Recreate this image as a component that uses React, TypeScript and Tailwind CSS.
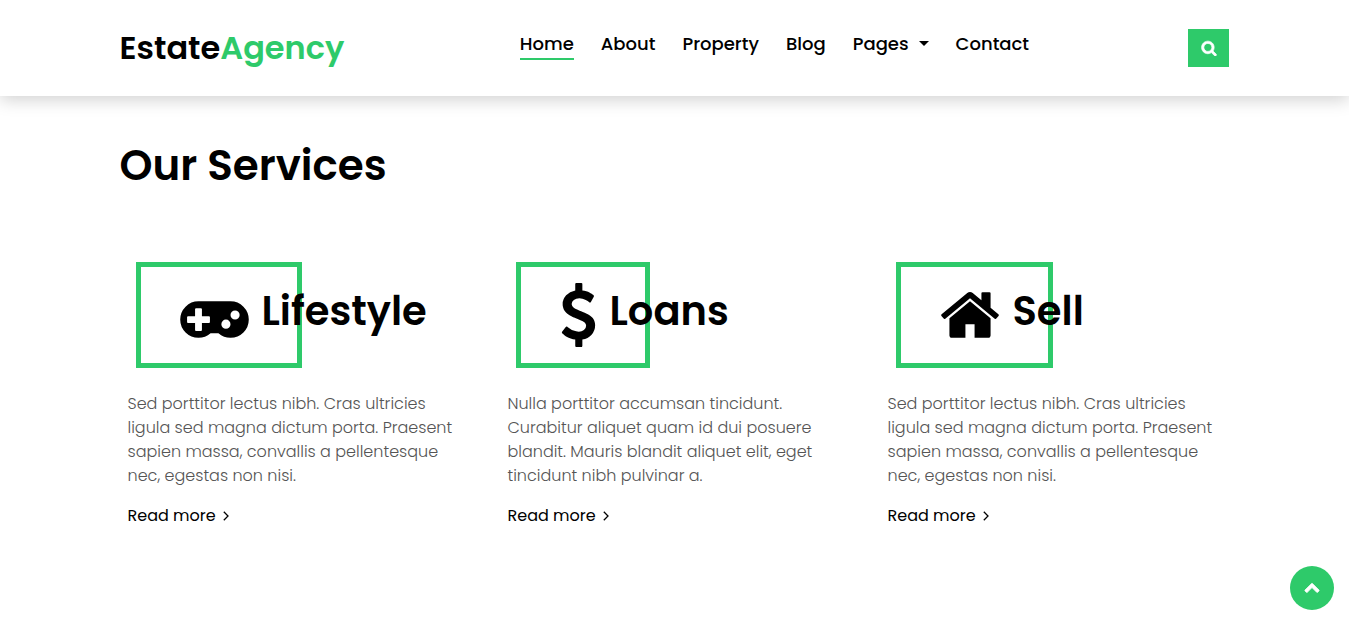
import type { ReactNode } from "react";

const GAMEPAD =
  "M832 1088v-128q0-14-9-23t-23-9h-192v-192q0-14-9-23t-23-9h-128q-14 0-23 9t-9 23v192h-192q-14 0-23 9t-9 23v128q0 14 9 23t23 9h192v192q0 14 9 23t23 9h128q14 0 23-9t9-23v-192h192q14 0 23-9t9-23zm576 64q0-53-37.5-90.5t-90.5-37.5-90.5 37.5-37.5 90.5 37.5 90.5 90.5 37.5 90.5-37.5 37.5-90.5zm256-256q0-53-37.5-90.5t-90.5-37.5-90.5 37.5-37.5 90.5 37.5 90.5 90.5 37.5 90.5-37.5 37.5-90.5zm256 128q0 212-150 362t-362 150q-192 0-338-128h-220q-146 128-338 128-212 0-362-150t-150-362 150-362 362-150h896q212 0 362 150t150 362z";
const DOLLAR =
  "M1362 1185q0 153-99.5 263.5t-258.5 136.5v175q0 14-9 23t-23 9h-135q-13 0-22.5-9.5t-9.5-22.5v-175q-66-9-127.5-31t-101.5-44.5-74-48-46.5-37.5-17.5-18q-17-21-2-41l103-135q7-10 23-12 15-2 24 9l2 2q113 99 243 125 37 8 74 8 81 0 142.5-43t61.5-122q0-28-15-53t-33.5-42-58.5-37.5-66-32-80-32.5q-39-16-61.5-25t-61.5-26.5-62.5-31-56.5-35.5-53.5-42.5-43.5-49-35.5-58-21-66.5-8.5-78q0-138 98-242t255-134v-180q0-13 9.5-22.5t22.5-9.5h135q14 0 23 9t9 23v176q57 6 110.5 23t87 33.5 63.5 37.5 39 29 15 14q17 18 5 38l-81 146q-8 15-23 16-14 3-27-7-3-3-14.5-12t-39-26.5-58.5-32-74.5-26-85.5-11.5q-95 0-155 43t-60 111q0 26 8.5 48t29.5 41.5 39.5 33 56 31 60.5 27 70 27.5q53 20 81 31.5t76 35 75.5 42.5 62 50 53 63.5 31.5 76.5 13 94z";
const HOME =
  "M1472 992v480q0 26-19 45t-45 19h-384v-384h-256v384h-384q-26 0-45-19t-19-45v-480q0-1 .5-3t.5-3l575-474 575 474q1 2 1 6zm223-69l-62 74q-8 9-21 11h-3q-13 0-21-7l-692-577-692 577q-12 8-24 7-13-2-21-11l-62-74q-8-10-7-23.5t11-21.5l719-599q32-26 76-26t76 26l244 204v-195q0-14 9-23t23-9h192q14 0 23 9t9 23v408l219 182q10 8 11 21.5t-7 23.5z";
const SEARCH =
  "M1216 832q0-185-131.5-316.5t-316.5-131.5-316.5 131.5-131.5 316.5 131.5 316.5 316.5 131.5 316.5-131.5 131.5-316.5zm512 832q0 52-38 90t-90 38q-54 0-90-38l-343-342q-179 124-399 124-143 0-273.5-55.5t-225-150-150-225-55.5-273.5 55.5-273.5 150-225 225-150 273.5-55.5 273.5 55.5 225 150 150 225 55.5 273.5q0 220-124 399l343 343q37 37 37 90z";
const CHEVRON_UP =
  "M1683 1331l-166 165q-19 19-45 19t-45-19l-531-531-531 531q-19 19-45 19t-45-19l-166-165q-19-19-19-45.5t19-45.5l742-741q19-19 45-19t45 19l742 741q19 19 19 45.5t-19 45.5z";

type Service = { title: string; icon: ReactNode; text: string };

const services: Service[] = [
  {
    title: "Lifestyle",
    icon: (
      <svg viewBox="0 0 1920 1792" className="h-16 w-[69px]" fill="currentColor" aria-hidden="true">
        <path d={GAMEPAD} />
      </svg>
    ),
    text: "Sed porttitor lectus nibh. Cras ultricies ligula sed magna dictum porta. Praesent sapien massa, convallis a pellentesque nec, egestas non nisi.",
  },
  {
    title: "Loans",
    icon: (
      <svg viewBox="384 0 1024 1792" className="h-16 w-[37px]" fill="currentColor" aria-hidden="true">
        <path d={DOLLAR} />
      </svg>
    ),
    text: "Nulla porttitor accumsan tincidunt. Curabitur aliquet quam id dui posuere blandit. Mauris blandit aliquet elit, eget tincidunt nibh pulvinar a.",
  },
  {
    title: "Sell",
    icon: (
      <svg viewBox="64 0 1664 1792" className="h-16 w-[60px]" fill="currentColor" aria-hidden="true">
        <path d={HOME} />
      </svg>
    ),
    text: "Sed porttitor lectus nibh. Cras ultricies ligula sed magna dictum porta. Praesent sapien massa, convallis a pellentesque nec, egestas non nisi.",
  },
];

const links = ["Home", "About", "Property", "Blog", "Pages", "Contact"];

function NavLink({ label }: { label: string }) {
  const active = label === "Home";
  return (
    <a
      href="#"
      aria-current={active ? "page" : undefined}
      className={
        active
          ? "flex items-center border-b-2 border-[#2eca6a] pb-0.5"
          : "flex items-center border-b-2 border-transparent pb-0.5"
      }
    >
      {label}
      {label === "Pages" && (
        <svg viewBox="0 0 10 5" className="mb-0.5 ml-2.5 h-[5px] w-[10px]" aria-hidden="true">
          <path d="M0 0h10L5 5z" />
        </svg>
      )}
    </a>
  );
}

function ServiceCard({ title, icon, text }: Service) {
  return (
    <article>
      <div className="flex items-center pl-4">
        <div className="flex h-[106px] shrink-0 items-center border-5 border-[#2eca6a] pr-12 pl-[39px]">{icon}</div>
        <h3 className="relative -ml-10 pb-2 text-[40px] leading-12 font-semibold">{title}</h3>
      </div>
      <div className="px-2 pt-6">
        <p className="text-base leading-6 font-light text-[#555555]">{text}</p>
        <a href="#" className="mt-4 flex items-center gap-[7px] text-base leading-6">
          Read more
          <svg viewBox="0 0 6 10" className="h-[10px] w-[6px]" fill="none" stroke="currentColor" strokeWidth="1.3" aria-hidden="true">
            <path d="M.8.8 5 5 .8 9.2" />
          </svg>
        </a>
      </div>
    </article>
  );
}

export default function App() {
  return (
    <div className="bg-white font-['Poppins','Inter',sans-serif] text-black">
      <header className="h-24 shadow-[0_4px_16px_rgba(0,0,0,0.18)]">
        <div className="mx-auto flex h-full max-w-[1140px] items-center justify-between px-[15px]">
          <a href="#" className="text-[32px] leading-12 font-semibold">
            Estate<span className="text-[#2eca6a]">Agency</span>
          </a>
          <nav className="flex gap-[27px] pb-1 pl-4 text-lg leading-6 font-medium">
            {links.map((label) => (
              <NavLink key={label} label={label} />
            ))}
          </nav>
          <button type="button" aria-label="Search" className="flex h-[38px] w-[41px] items-center justify-center bg-[#2eca6a] text-white">
            <svg viewBox="0 0 1792 1792" className="size-4" fill="currentColor" stroke="currentColor" strokeWidth="80" aria-hidden="true">
              <path d={SEARCH} />
            </svg>
          </button>
        </div>
      </header>
      <main className="mx-auto max-w-[1140px] px-[15px] pt-[41px] pb-24">
        <h2 className="text-[42px] leading-[58px] font-semibold">Our Services</h2>
        <div className="mt-[67px] grid grid-cols-3 gap-[30px]">
          {services.map((service) => (
            <ServiceCard key={service.title} {...service} />
          ))}
        </div>
      </main>
      <button type="button" aria-label="Back to top" className="fixed right-[15px] bottom-[15px] flex size-11 items-center justify-center rounded-full bg-[#2eca6a] pb-0.5 text-white">
        <svg viewBox="0 0 1792 1792" className="size-4" fill="currentColor" stroke="currentColor" strokeWidth="80" aria-hidden="true">
          <path d={CHEVRON_UP} />
        </svg>
      </button>
    </div>
  );
}
